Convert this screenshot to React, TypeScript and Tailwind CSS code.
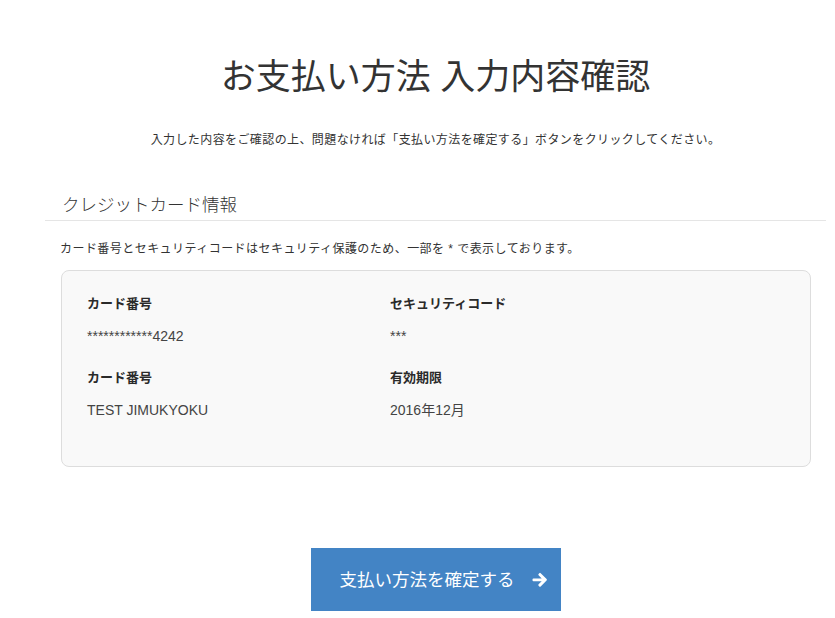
import React from "react";

const jp = "font-['Liberation_Sans','Noto_Sans_CJK_JP',sans-serif]";

function Arrow() {
  return (
    <svg width="16" height="16" viewBox="0 0 16 16" aria-hidden="true">
      <path
        d="M1.5 6.4h8.2L6.6 3.3a1 1 0 0 1 0-1.4l.7-.7a1 1 0 0 1 1.4 0l5.9 5.9a1 1 0 0 1 0 1.4l-5.9 5.9a1 1 0 0 1-1.4 0l-.7-.7a1 1 0 0 1 0-1.4l3.1-3.1H1.5a1 1 0 0 1-1-1V7.4a1 1 0 0 1 1-1z"
        fill="#ffffff"
      />
    </svg>
  );
}

function Field({ label, value }: { label: string; value: string }) {
  return (
    <div className="flex flex-col">
      <div className="text-[13px] leading-[20px] font-bold text-[#2a2a2a]">{label}</div>
      <div className="mt-[12px] text-[14px] leading-[20px] text-[#444]">{value}</div>
    </div>
  );
}

export default function App() {
  return (
    <div className={`${jp} w-[835px] h-[618px] bg-white text-[#333] overflow-hidden`}>
      <div className="pl-[45px] pr-[9px] pt-[57px]">
        <h1 className="text-center text-[35px] leading-[40px] font-normal text-[#333]">
          お支払い方法 入力内容確認
        </h1>
        <p className="mt-[33px] text-center text-[12px] leading-[20px] tracking-[0.4px] text-[#333]">
          入力した内容をご確認の上、問題なければ「支払い方法を確定する」ボタンをクリックしてください。
        </p>
        <div className="mt-[43px] border-b border-[#e5e5e5] pb-[3px] pl-[17px]">
          <h2 className="text-[17.5px] leading-[24px] font-light text-[#333]">クレジットカード情報</h2>
        </div>
        <div className="px-[15px]">
          <p className="mt-[18px] text-[12px] leading-[20px] tracking-[0.45px] text-[#333]">
            カード番号とセキュリティコードはセキュリティ保護のため、一部を * で表示しております。
          </p>
          <div className="mt-[11px] ml-px h-[197px] rounded-[8px] border border-[#dddddd] bg-[#f9f9f9] pl-[25px] pr-[25px] pt-[23px]">
            <div className="grid grid-cols-[303px_1fr] gap-y-[22px]">
              <Field label="カード番号" value="************4242" />
              <Field label="セキュリティコード" value="***" />
              <Field label="カード番号" value="TEST JIMUKYOKU" />
              <Field label="有効期限" value="2016年12月" />
            </div>
          </div>
        </div>
        <div className="mt-[81px] flex justify-center">
          <button className="flex h-[63px] w-[250px] items-center bg-[#4384c5] pl-[29px] text-white">
            <span className="text-[17.5px] leading-[24px]">支払い方法を確定する</span>
            <span className="ml-[17px] flex items-center">
              <Arrow />
            </span>
          </button>
        </div>
      </div>
    </div>
  );
}
